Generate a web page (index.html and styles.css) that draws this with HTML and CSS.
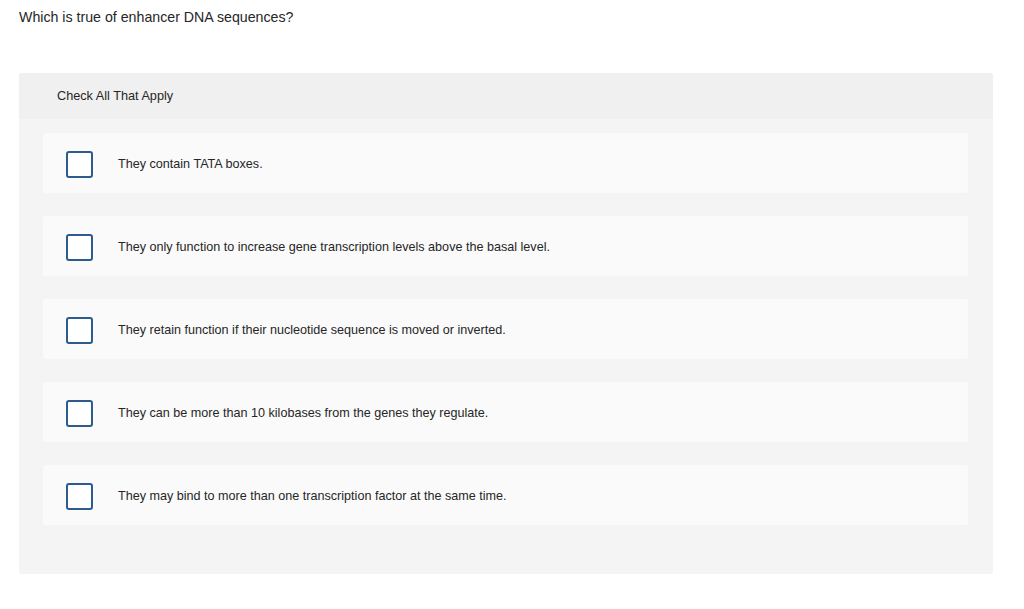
FILE: index.html
```html
<!DOCTYPE html>
<html lang="en">
<head>
<meta charset="UTF-8">
<title>Check All That Apply</title>
<link rel="stylesheet" href="styles.css">
</head>
<body>
    <p class="question">Which is true of enhancer DNA sequences?</p>

    <div class="panel">
        <div class="panel-head">Check All That Apply</div>
        <div class="choices">
            <label class="choice"><span class="box"></span><span class="label">They contain TATA boxes.</span></label>
            <label class="choice"><span class="box"></span><span class="label">They only function to increase gene transcription levels above the basal level.</span></label>
            <label class="choice"><span class="box"></span><span class="label">They retain function if their nucleotide sequence is moved or inverted.</span></label>
            <label class="choice"><span class="box"></span><span class="label">They can be more than 10 kilobases from the genes they regulate.</span></label>
            <label class="choice"><span class="box"></span><span class="label">They may bind to more than one transcription factor at the same time.</span></label>
        </div>
    </div>
</body>
</html>
```

FILE: styles.css
```css
body {
    margin: 0;
    padding: 0 31px 0 19px;
    font-family: "Liberation Sans", Arial, sans-serif;
    color: #262626;
    background: #fff;
}

.question {
    margin: 0;
    padding-top: 9px;
    font-size: 14.2px;
    line-height: 16px;
}

.panel {
    margin-top: 48px;
    background: #f4f4f4;
    border-radius: 3px;
    overflow: hidden;
}

.panel-head {
    background: #f0f0f0;
    height: 46px;
    padding-left: 38px;
    font-size: 12.7px;
    line-height: 46px;
}

.choices {
    display: flex;
    flex-direction: column;
    gap: 23px;
    padding: 14px 25px 49px 24px;
}

.choice {
    display: flex;
    align-items: center;
    height: 60px;
    padding-left: 23px;
    gap: 25px;
    background: #fafafa;
    border-radius: 3px;
    cursor: pointer;
}

.box {
    width: 23px;
    height: 23px;
    border: 2px solid #2c5b8d;
    border-radius: 3px;
    background: #fff;
    flex: none;
    margin-top: 2px;
}

.label {
    font-size: 12.6px;
    margin-top: 1px;
}
```
